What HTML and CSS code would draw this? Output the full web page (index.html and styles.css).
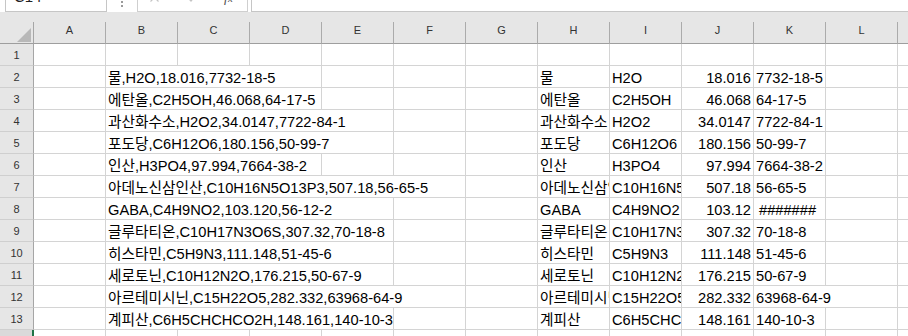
FILE: index.html
```html
<!DOCTYPE html>
<html lang="ko">
<head>
<meta charset="utf-8">
<title>Sheet</title>
<link rel="stylesheet" href="styles.css">
</head>
<body>
<div class="fbar">
  <div class="namebox">C14</div>
  <div class="fsep"><span class="dot"></span><span class="dot"></span><span class="dot"></span></div>
  <div class="fbtns">
    <svg class="ic ic-x" width="9" height="9" viewBox="0 0 9 9"><path d="M0.5 0.5L8.5 8.5M8.5 0.5L0.5 8.5" stroke="#c4c4c4" stroke-width="1.2" fill="none"/></svg>
    <svg class="ic ic-ok" width="11" height="9" viewBox="0 0 11 9"><path d="M0.5 4.5L4 8L10.5 0.5" stroke="#c4c4c4" stroke-width="1.2" fill="none"/></svg>
    <span class="fx">f<span class="fxs">x</span></span>
  </div>
  <div class="finput"></div>
</div>
<div class="gap"></div>
<div class="sheet">
  <div class="hrow">
    <div class="corner"><svg width="14" height="14" viewBox="0 0 14 14"><path d="M14 0L14 14L0 14Z" fill="#b8b8b8"/></svg></div>
    <div class="ch">A</div><div class="ch">B</div><div class="ch">C</div><div class="ch">D</div><div class="ch">E</div><div class="ch">F</div><div class="ch">G</div><div class="ch">H</div><div class="ch">I</div><div class="ch">J</div><div class="ch">K</div><div class="ch">L</div><div class="ch">M</div>
  </div>
  <div class="row"><div class="rh">1</div><div class="c"></div><div class="c"></div><div class="c"></div><div class="c"></div><div class="c"></div><div class="c"></div><div class="c"></div><div class="c"></div><div class="c"></div><div class="c"></div><div class="c"></div><div class="c"></div><div class="c"></div></div>

  <div class="row"><div class="rh">2</div><div class="c"></div><div class="c s3">물,H2O,18.016,7732-18-5</div><div class="c"></div><div class="c"></div><div class="c"></div><div class="c">물</div><div class="c">H2O</div><div class="c n">18.016</div><div class="c">7732-18-5</div><div class="c"></div><div class="c"></div></div>

  <div class="row"><div class="rh">3</div><div class="c"></div><div class="c s3">에탄올,C2H5OH,46.068,64-17-5</div><div class="c"></div><div class="c"></div><div class="c"></div><div class="c">에탄올</div><div class="c">C2H5OH</div><div class="c n">46.068</div><div class="c">64-17-5</div><div class="c"></div><div class="c"></div></div>

  <div class="row"><div class="rh">4</div><div class="c"></div><div class="c s4">과산화수소,H2O2,34.0147,7722-84-1</div><div class="c"></div><div class="c"></div><div class="c">과산화수소</div><div class="c">H2O2</div><div class="c n">34.0147</div><div class="c">7722-84-1</div><div class="c"></div><div class="c"></div></div>

  <div class="row"><div class="rh">5</div><div class="c"></div><div class="c s4">포도당,C6H12O6,180.156,50-99-7</div><div class="c"></div><div class="c"></div><div class="c">포도당</div><div class="c">C6H12O6</div><div class="c n">180.156</div><div class="c">50-99-7</div><div class="c"></div><div class="c"></div></div>

  <div class="row"><div class="rh">6</div><div class="c"></div><div class="c s3">인산,H3PO4,97.994,7664-38-2</div><div class="c"></div><div class="c"></div><div class="c"></div><div class="c">인산</div><div class="c">H3PO4</div><div class="c n">97.994</div><div class="c">7664-38-2</div><div class="c"></div><div class="c"></div></div>

  <div class="row"><div class="rh">7</div><div class="c"></div><div class="c s5">아데노신삼인산,C10H16N5O13P3,507.18,56-65-5</div><div class="c"></div><div class="c">아데노신삼인산</div><div class="c">C10H16N5O13P3</div><div class="c n">507.18</div><div class="c">56-65-5</div><div class="c"></div><div class="c"></div></div>

  <div class="row"><div class="rh">8</div><div class="c"></div><div class="c s4">GABA,C4H9NO2,103.120,56-12-2</div><div class="c"></div><div class="c"></div><div class="c">GABA</div><div class="c">C4H9NO2</div><div class="c n">103.12</div><div class="c hash">#######</div><div class="c"></div><div class="c"></div></div>

  <div class="row"><div class="rh">9</div><div class="c"></div><div class="c s4">글루타티온,C10H17N3O6S,307.32,70-18-8</div><div class="c"></div><div class="c"></div><div class="c">글루타티온</div><div class="c">C10H17N3O6S</div><div class="c n">307.32</div><div class="c">70-18-8</div><div class="c"></div><div class="c"></div></div>

  <div class="row"><div class="rh">10</div><div class="c"></div><div class="c s4">히스타민,C5H9N3,111.148,51-45-6</div><div class="c"></div><div class="c"></div><div class="c">히스타민</div><div class="c">C5H9N3</div><div class="c n">111.148</div><div class="c">51-45-6</div><div class="c"></div><div class="c"></div></div>

  <div class="row"><div class="rh">11</div><div class="c"></div><div class="c s4">세로토닌,C10H12N2O,176.215,50-67-9</div><div class="c"></div><div class="c"></div><div class="c">세로토닌</div><div class="c">C10H12N2O</div><div class="c n">176.215</div><div class="c">50-67-9</div><div class="c"></div><div class="c"></div></div>

  <div class="row"><div class="rh">12</div><div class="c"></div><div class="c s5">아르테미시닌,C15H22O5,282.332,63968-64-9</div><div class="c"></div><div class="c">아르테미시닌</div><div class="c">C15H22O5</div><div class="c n">282.332</div><div class="c s2">63968-64-9</div><div class="c"></div></div>

  <div class="row"><div class="rh">13</div><div class="c"></div><div class="c s4">계피산,C6H5CHCHCO2H,148.161,140-10-3</div><div class="c"></div><div class="c"></div><div class="c">계피산</div><div class="c">C6H5CHCHCO2H</div><div class="c n">148.161</div><div class="c">140-10-3</div><div class="c"></div><div class="c"></div></div>

  <div class="row"><div class="rh sel">14</div><div class="c"></div><div class="c"></div><div class="c"></div><div class="c"></div><div class="c"></div><div class="c"></div><div class="c"></div><div class="c"></div><div class="c"></div><div class="c"></div><div class="c"></div><div class="c"></div><div class="c"></div></div>
</div>
</body>
</html>
```
FILE: styles.css
```css
* { box-sizing: border-box; }
html, body { margin: 0; padding: 0; }
body {
  width: 908px;
  height: 336px;
  overflow: hidden;
  background: #fff;
  font-family: "Liberation Sans", "Noto Sans CJK KR", sans-serif;
}

/* formula bar (mostly scrolled off the top) */
.fbar {
  height: 12px;
  display: flex;
  align-items: flex-end;
  overflow: hidden;
  padding-left: 5px;
  background: #fff;
}
.namebox {
  flex: 0 0 102px;
  height: 26px;
  border: 1px solid #c6c6c6;
  border-top: none;
  display: flex;
  align-items: center;
  padding: 0 0 4px 8px;
  font-size: 15px;
  color: #222;
}
.fsep {
  flex: 0 0 30px;
  height: 26px;
  display: flex;
  flex-direction: column;
  align-items: center;
  justify-content: center;
  gap: 2px;
  padding-top: 6px;
}
.dot {
  width: 2px;
  height: 2px;
  background: #9a9a9a;
}
.fbtns {
  flex: 0 0 111px;
  height: 26px;
  border: 1px solid #cfcfcf;
  border-top: none;
  display: flex;
  align-items: center;
  padding: 0 0 2px 12px;
}
.ic-x { margin-right: 28px; }
.ic-ok { margin-right: 26px; }
.fx {
  font-family: "Liberation Serif", serif;
  font-style: italic;
  font-size: 14px;
  color: #555;
}
.fxs { font-size: 11px; }
.finput {
  flex: 1 1 auto;
  margin-left: 3px;
  height: 26px;
  border: 1px solid #c6c6c6;
  border-top: none;
  border-right: none;
}

.gap {
  height: 10px;
  background: #e6e6e6;
}

/* grid */
.hrow, .row {
  display: grid;
  grid-template-columns: 34px repeat(13, 72px);
  height: 22px;
}
.corner {
  background: #e6e6e6;
  border-right: 1px solid #a6a6a6;
  border-bottom: 1px solid #9e9e9e;
  display: flex;
  justify-content: flex-end;
  align-items: flex-end;
  padding: 0 2px 1px 0;
}
.ch {
  background: #e6e6e6;
  border-right: 1px solid #ababab;
  border-bottom: 1px solid #9e9e9e;
  display: flex;
  justify-content: center;
  align-items: flex-start;
  font-size: 11px;
  line-height: 17px;
  color: #333;
}
.rh {
  background: #e6e6e6;
  border-right: 1px solid #a6a6a6;
  border-bottom: 1px solid #cfcfcf;
  display: flex;
  justify-content: center;
  align-items: flex-start;
  padding-top: 1px;
  font-size: 11px;
  line-height: 20px;
  color: #333;
}
.rh.sel {
  background: #dadada;
  border-right-color: #217346;
  box-shadow: inset -1px 0 0 #217346;
}
.c {
  background: #fff;
  border-right: 1px solid #d4d4d4;
  border-bottom: 1px solid #d4d4d4;
  display: flex;
  align-items: flex-end;
  padding: 0 2px;
  font-size: 14.67px;
  line-height: 17px;
  color: #000;
  white-space: nowrap;
  overflow: hidden;
}
.c.n { justify-content: flex-end; }
.c.hash { padding-left: 5px; }
.s2 { grid-column: span 2; }
.s3 { grid-column: span 3; }
.s4 { grid-column: span 4; }
.s5 { grid-column: span 5; }
```
